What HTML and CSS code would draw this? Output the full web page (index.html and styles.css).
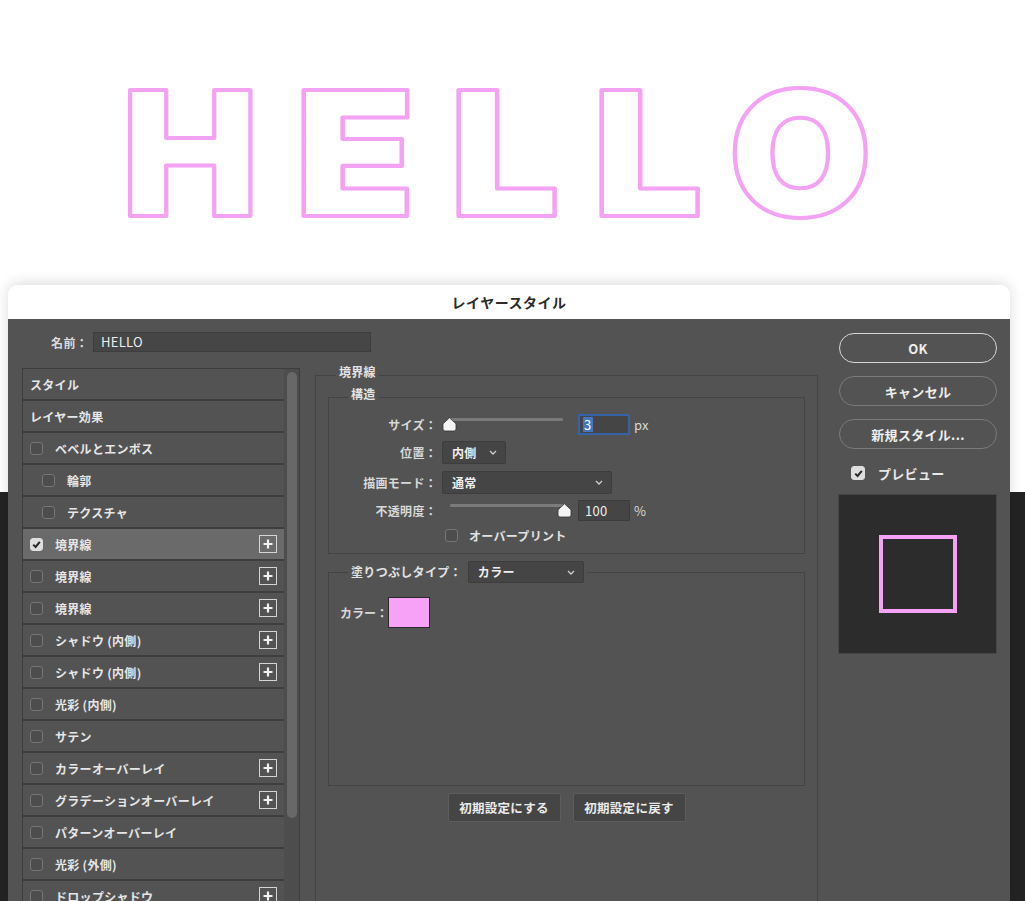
FILE: index.html
```html
<!DOCTYPE html>
<html lang="ja">

<head>
  <meta charset="utf-8">
  <title>レイヤースタイル</title>
  <link rel="stylesheet" href="styles.css">
</head>

<body>
  <div class="artboard">
    <svg class="hello" width="1025" height="260" viewBox="0 0 1025 260">
      <text class="g-h" x="190.5" y="216">H</text>
      <text class="g-e" x="355" y="216">E</text>
      <text class="g-l" x="505" y="216">L</text>
      <text class="g-l" x="648" y="216">L</text>
      <text class="g-o" x="800.5" y="216">O</text>
    </svg>
  </div>

  <div class="dialog">
    <div class="titlebar">レイヤースタイル</div>
    <div class="dialog-body">
      <div class="main">
        <div class="name-row">
          <span class="name-label">名前：</span>
          <div class="name-input">HELLO</div>
        </div>

        <div class="columns">
          <div class="style-list">
            <div class="rows">
              <div class="row">スタイル</div>
              <div class="row">レイヤー効果</div>
              <div class="row"><span class="check"></span>ベベルとエンボス</div>
              <div class="row sub"><span class="check"></span>輪郭</div>
              <div class="row sub"><span class="check"></span>テクスチャ</div>
              <div class="row active">
                <span class="check on"><svg width="11" height="11" viewBox="0 0 11 11"><path d="M2.2 5.6 L4.6 8 L8.8 2.8" /></svg></span>境界線
                <span class="plus"><svg width="12" height="12" viewBox="0 0 12 12"><path d="M6 1.5 V10.5 M1.5 6 H10.5" /></svg></span>
              </div>
              <div class="row"><span class="check"></span>境界線
                <span class="plus"><svg width="12" height="12" viewBox="0 0 12 12"><path d="M6 1.5 V10.5 M1.5 6 H10.5" /></svg></span>
              </div>
              <div class="row"><span class="check"></span>境界線
                <span class="plus"><svg width="12" height="12" viewBox="0 0 12 12"><path d="M6 1.5 V10.5 M1.5 6 H10.5" /></svg></span>
              </div>
              <div class="row"><span class="check"></span>シャドウ (内側)
                <span class="plus"><svg width="12" height="12" viewBox="0 0 12 12"><path d="M6 1.5 V10.5 M1.5 6 H10.5" /></svg></span>
              </div>
              <div class="row"><span class="check"></span>シャドウ (内側)
                <span class="plus"><svg width="12" height="12" viewBox="0 0 12 12"><path d="M6 1.5 V10.5 M1.5 6 H10.5" /></svg></span>
              </div>
              <div class="row"><span class="check"></span>光彩 (内側)</div>
              <div class="row"><span class="check"></span>サテン</div>
              <div class="row"><span class="check"></span>カラーオーバーレイ
                <span class="plus"><svg width="12" height="12" viewBox="0 0 12 12"><path d="M6 1.5 V10.5 M1.5 6 H10.5" /></svg></span>
              </div>
              <div class="row"><span class="check"></span>グラデーションオーバーレイ
                <span class="plus"><svg width="12" height="12" viewBox="0 0 12 12"><path d="M6 1.5 V10.5 M1.5 6 H10.5" /></svg></span>
              </div>
              <div class="row"><span class="check"></span>パターンオーバーレイ</div>
              <div class="row"><span class="check"></span>光彩 (外側)</div>
              <div class="row"><span class="check"></span>ドロップシャドウ
                <span class="plus"><svg width="12" height="12" viewBox="0 0 12 12"><path d="M6 1.5 V10.5 M1.5 6 H10.5" /></svg></span>
              </div>
            </div>
            <div class="scrollbar">
              <div class="thumb"></div>
            </div>
          </div>

          <fieldset class="panel">
            <legend>境界線</legend>

            <fieldset class="group">
              <legend>構造</legend>
              <div class="field size-row">
                <span class="label">サイズ：</span>
                <div class="slider">
                  <div class="track"></div>
                  <svg class="knob knob-left" width="15" height="15" viewBox="0 0 15 15"><path d="M7.5 0.8 L14 6.8 V12 Q14 14 12 14 H3 Q1 14 1 12 V6.8 Z" /></svg>
                </div>
                <div class="num focus"><span class="sel">3</span></div>
                <span class="unit">px</span>
              </div>
              <div class="field pos-row">
                <span class="label">位置：</span>
                <div class="select pos-select">内側<svg width="8" height="5" viewBox="0 0 8 5"><polyline points="1,1 4,4 7,1" /></svg></div>
              </div>
              <div class="field mode-row">
                <span class="label">描画モード：</span>
                <div class="select mode-select">通常<svg width="8" height="5" viewBox="0 0 8 5"><polyline points="1,1 4,4 7,1" /></svg></div>
              </div>
              <div class="field opacity-row">
                <span class="label">不透明度：</span>
                <div class="slider">
                  <div class="track"></div>
                  <svg class="knob knob-right" width="15" height="15" viewBox="0 0 15 15"><path d="M7.5 0.8 L14 6.8 V12 Q14 14 12 14 H3 Q1 14 1 12 V6.8 Z" /></svg>
                </div>
                <div class="num">100</div>
                <span class="unit">%</span>
              </div>
              <div class="field print-row">
                <span class="check"></span>オーバープリント
              </div>
            </fieldset>

            <fieldset class="group fill">
              <legend>
                <span>塗りつぶしタイプ：</span>
                <span class="select fill-select">カラー<svg width="8" height="5" viewBox="0 0 8 5"><polyline points="1,1 4,4 7,1" /></svg></span>
              </legend>
              <div class="color-row">
                <span>カラー：</span>
                <span class="swatch"></span>
              </div>
            </fieldset>

            <div class="reset-row">
              <div class="btn">初期設定にする</div>
              <div class="btn">初期設定に戻す</div>
            </div>
          </fieldset>
        </div>
      </div>

      <div class="side">
        <div class="pill default">OK</div>
        <div class="pill">キャンセル</div>
        <div class="pill">新規スタイル...</div>
        <div class="preview-toggle">
          <span class="check on"><svg width="11" height="11" viewBox="0 0 11 11"><path d="M2.2 5.6 L4.6 8 L8.8 2.8" /></svg></span>プレビュー
        </div>
        <div class="preview">
          <div class="preview-square"></div>
        </div>
      </div>
    </div>
  </div>
</body>

</html>
```

FILE: styles.css
```css
body {
  margin: 0;
  background: #232323;
  font-family: "Noto Sans CJK JP", "Noto Sans", sans-serif;
  font-size: 12px;
  letter-spacing: 0.3px;
  color: #e4e4e4;
}

.artboard {
  height: 492px;
  background: #fff;
}

.hello {
  display: block;
}

.hello text {
  font-family: Inter, "Liberation Sans", sans-serif;
  font-weight: 900;
  font-size: 173px;
  fill: none;
  stroke: #f4a2f4;
  stroke-width: 4;
  stroke-linejoin: round;
  text-anchor: middle;
  transform-box: fill-box;
  transform-origin: center;
}

.hello .g-h {
  transform: scaleX(1.06);
}

.hello .g-e {
  transform: scaleX(1.14);
}

.hello .g-l {
  transform: scaleX(1.13);
}

.hello .g-o {
  transform: scaleX(1.07);
}

/* dialog */

.dialog {
  position: absolute;
  top: 285px;
  left: 8px;
  width: 1002px;
  bottom: 0;
  overflow: hidden;
  border-radius: 10px 10px 0 0;
  box-shadow: 0 -2px 14px rgba(0, 0, 0, 0.14);
}

.titlebar {
  height: 34px;
  background: #fff;
  display: flex;
  align-items: center;
  justify-content: center;
  font-size: 14px;
  font-weight: 700;
  color: #2b2b2b;
  letter-spacing: 0.5px;
}

.dialog-body {
  display: flex;
  height: calc(100% - 34px);
  padding: 0 13px 0 14px;
  box-sizing: border-box;
  background: #535353;
}

.main {
  width: 796px;
}

.name-row {
  display: flex;
  align-items: center;
  height: 20px;
  margin-top: 13px;
}

.name-label {
  width: 66px;
  margin-right: 5px;
  text-align: right;
  font-weight: 700;
  color: #dcdcdc;
}

.name-input {
  width: 278px;
  height: 20px;
  box-sizing: border-box;
  padding-left: 7px;
  background: #464646;
  border: 1px solid #3d3d3d;
  color: #eee;
  font-size: 13px;
  line-height: 18px;
}

.columns {
  display: flex;
  align-items: flex-start;
  margin-top: 16px;
}

/* effects list */

.style-list {
  display: flex;
  width: 278px;
  height: 600px;
  box-sizing: border-box;
  border: 1px solid #3d3d3d;
}

.rows {
  flex: 1;
}

.row {
  display: flex;
  align-items: center;
  height: 30px;
  padding-left: 7px;
  border-bottom: 2px solid #3e3e3e;
  font-weight: 700;
  color: #e6e6e6;
}

.row.sub {
  padding-left: 19px;
}

.row.active {
  background: #6a6a6a;
}

.row .check {
  margin-right: 12px;
}

.check {
  display: flex;
  align-items: center;
  justify-content: center;
  flex: none;
  width: 13px;
  height: 13px;
  box-sizing: border-box;
  border: 1px solid #767676;
  border-radius: 3px;
  background: #4d4d4d;
}

.check.on {
  background: #dedede;
  border-color: #dedede;
}

.check svg path {
  fill: none;
  stroke: #2a2a2a;
  stroke-width: 2;
}

.plus {
  display: flex;
  align-items: center;
  justify-content: center;
  width: 18px;
  height: 18px;
  box-sizing: border-box;
  margin-left: auto;
  margin-right: 7px;
  border: 1.5px solid #d4d4d4;
}

.plus path {
  stroke: #f2f2f2;
  stroke-width: 2.2;
}

.scrollbar {
  width: 15px;
  padding-top: 3px;
  background: #4d4d4d;
}

.thumb {
  width: 10px;
  height: 446px;
  margin: 0 auto;
  border-radius: 5px;
  background: #686868;
}

/* settings panel */

fieldset {
  margin: 0;
  min-width: 0;
  border: 1px solid #444;
}

legend {
  padding: 0 3px 6px;
  line-height: 16px;
  font-weight: 700;
  color: #e2e2e2;
}

.panel {
  width: 503px;
  height: 560px;
  box-sizing: border-box;
  margin-left: 15px;
  margin-top: -4px;
  padding: 0 12px;
}

.panel > legend {
  margin-left: 8px;
}

.group {
  padding: 0 0 11px;
}

.group > legend {
  margin-left: 19px;
}

.field {
  display: flex;
  align-items: center;
  font-weight: 700;
  color: #d8d8d8;
}

.label {
  width: 108px;
  margin-right: 5px;
  text-align: right;
}

.size-row {
  height: 22px;
  margin-top: 5px;
}

.pos-row {
  height: 23px;
  margin-top: 6px;
}

.mode-row {
  height: 23px;
  margin-top: 7px;
}

.opacity-row {
  height: 22px;
  margin-top: 5px;
}

.print-row {
  height: 14px;
  margin-top: 7px;
  padding-left: 116px;
  color: #e2e2e2;
}

.print-row .check {
  margin-right: 11px;
}

.slider {
  position: relative;
  width: 130px;
  height: 22px;
}

.track {
  height: 3px;
  margin: 5px 9px 0 8px;
  border-radius: 1px;
  background: #7a7a7a;
}

.knob {
  position: absolute;
  top: 4px;
}

.knob path {
  fill: #f4f4f4;
  stroke: #333;
  stroke-width: 0.8;
}

.knob-left {
  left: 0;
}

.knob-right {
  right: 0;
}

.num {
  display: flex;
  align-items: center;
  width: 52px;
  height: 21px;
  box-sizing: border-box;
  margin-left: 6px;
  padding-left: 6px;
  background: #454545;
  border: 1px solid #3c3c3c;
  color: #eee;
  font-size: 13px;
  font-weight: 400;
}

.num.focus {
  padding-left: 3px;
  border: 2px solid #3463a8;
}

.sel {
  padding: 0 1px;
  line-height: 15px;
  background: #4577c0;
  color: #fff;
}

.unit {
  margin-left: 4px;
  font-size: 13px;
  font-weight: 400;
  color: #d8d8d8;
}

.select {
  display: flex;
  align-items: center;
  justify-content: space-between;
  height: 23px;
  box-sizing: border-box;
  padding: 0 8px 0 9px;
  background: #454545;
  border: 1px solid #3d3d3d;
  border-radius: 2px;
  color: #eee;
  font-weight: 700;
}

.select polyline {
  fill: none;
  stroke: #cfcfcf;
  stroke-width: 1.3;
}

.pos-select {
  width: 64px;
}

.mode-select {
  width: 170px;
}

.fill {
  height: 225px;
  box-sizing: border-box;
  margin-top: 7px;
  padding-left: 11px;
}

.fill > legend {
  display: flex;
  align-items: center;
  margin-left: 8px;
  padding: 0 3px;
  line-height: 22px;
}

.fill-select {
  width: 116px;
  height: 22px;
  margin-left: 6px;
  font-weight: 700;
}

.color-row {
  display: flex;
  align-items: center;
  margin-top: 14px;
  color: #d8d8d8;
  font-weight: 700;
  letter-spacing: 0;
}

.swatch {
  width: 42px;
  height: 31px;
  box-sizing: border-box;
  background: #f7a2f7;
  border: 1.5px solid #2a2a2a;
}

.reset-row {
  display: flex;
  justify-content: center;
  gap: 12px;
  margin-top: 7px;
}

.btn {
  display: flex;
  align-items: center;
  justify-content: center;
  width: 113px;
  height: 29px;
  box-sizing: border-box;
  background: #454545;
  border: 1px solid #5d5d5d;
  border-radius: 2px;
  font-size: 12.5px;
  font-weight: 700;
  color: #ebebeb;
}

/* right column */

.side {
  width: 159px;
  margin-left: 20px;
  padding-top: 14px;
}

.pill {
  display: flex;
  align-items: center;
  justify-content: center;
  height: 30px;
  box-sizing: border-box;
  margin: 0 0 13px 1px;
  border: 1px solid #7b7b7b;
  border-radius: 15px;
  font-size: 13px;
  font-weight: 700;
  color: #eee;
}

.pill.default {
  border: 1.5px solid #d6d6d6;
}

.preview-toggle {
  display: flex;
  align-items: center;
  height: 22px;
  padding-left: 13px;
  font-size: 13px;
  font-weight: 700;
  color: #e8e8e8;
}

.preview-toggle .check {
  width: 14px;
  height: 14px;
  margin-right: 13px;
}

.preview {
  display: flex;
  align-items: center;
  justify-content: center;
  height: 160px;
  box-sizing: border-box;
  margin-top: 10px;
  background: #2c2c2c;
  border: 1px solid #474747;
}

.preview-square {
  width: 78px;
  height: 78px;
  box-sizing: border-box;
  border: 4px solid #f5a1f5;
}
```
